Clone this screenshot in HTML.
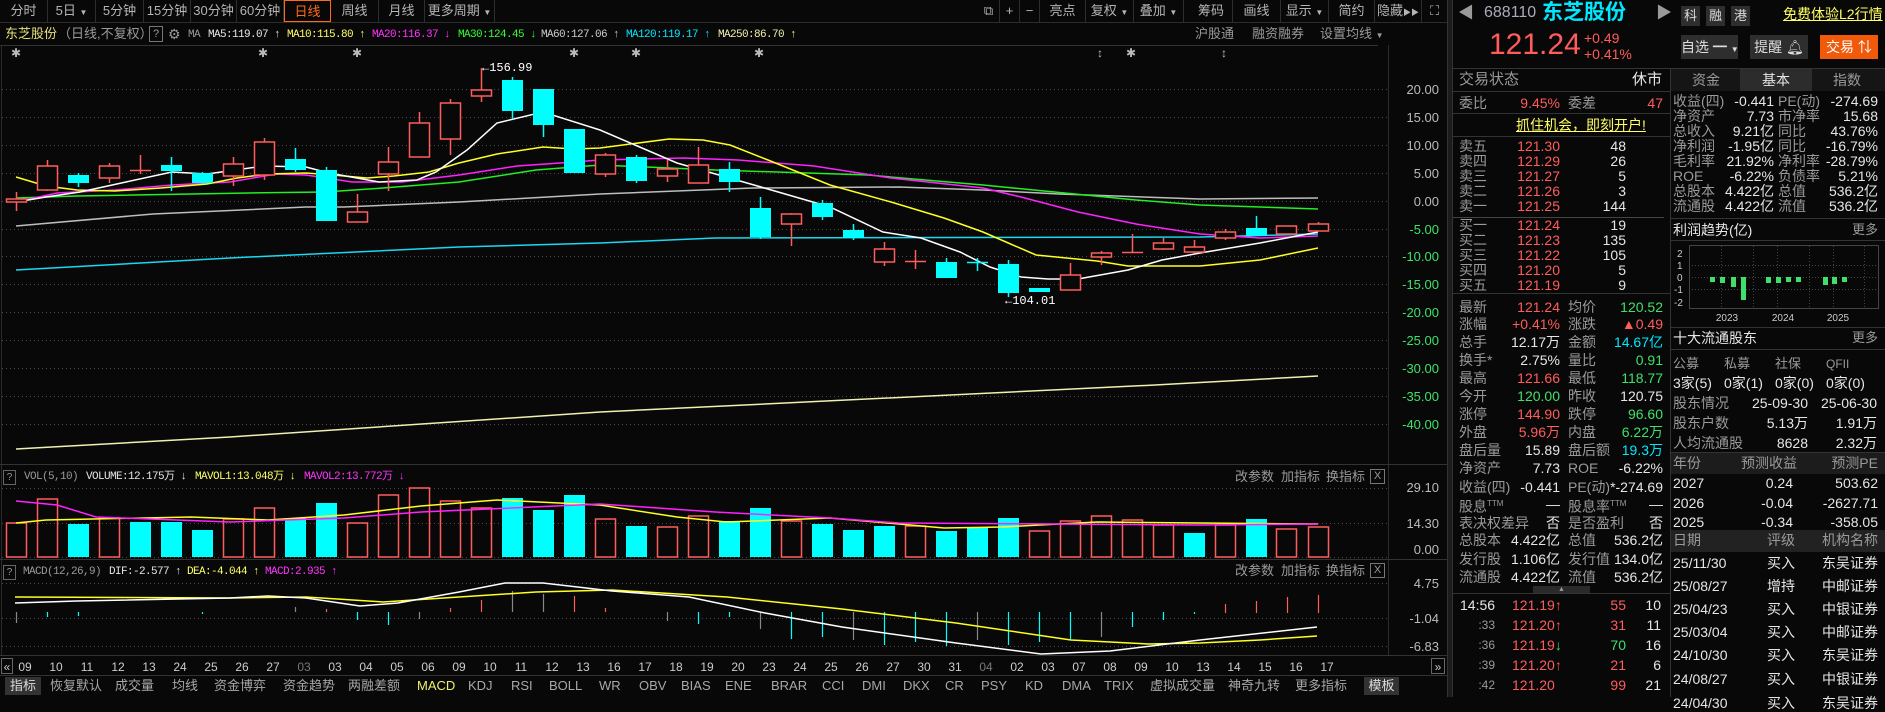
<!DOCTYPE html>
<html><head><meta charset="utf-8">
<style>
*{margin:0;padding:0;box-sizing:border-box}
body{width:1885px;height:697px;background:#080808;overflow:hidden;position:relative;font-family:"Liberation Sans","Noto Sans CJK SC",sans-serif;color:#ddd}
.t{position:absolute;font-size:14px;line-height:18px;white-space:nowrap}
.ra{text-align:right}
.g{color:#9a9a9a}.w{color:#e6e6e6}.r{color:#ff5c5c}.gr{color:#3fe06a}.c{color:#00e8ff}.y{color:#ffff66}
.m{font-family:"Liberation Mono","Noto Sans CJK SC",monospace;font-size:11px;letter-spacing:-0.6px}
.tb{position:absolute;top:0;height:22px;line-height:22px;font-size:13px;color:#b5b5b5;text-align:center;border-right:1px solid #2e2e2e;white-space:nowrap;overflow:hidden}
.bt{position:absolute;top:677px;height:18px;line-height:18px;font-size:13px;color:#a8a8a8;white-space:nowrap}
.hl{position:absolute;height:1px;background:#2c2c2c}
.vl{position:absolute;width:1px;background:#2c2c2c}
.btn{position:absolute;background:#2e2e2e;color:#ddd;font-size:14px;text-align:center;line-height:24px;height:24px;white-space:nowrap}
</style></head><body>

<!-- top toolbar -->
<div class="tb" style="left:0;width:48px">分时</div>
<div class="tb" style="left:48px;width:48px">5日 <span style="font-size:8px">▼</span></div>
<div class="tb" style="left:96px;width:48px">5分钟</div>
<div class="tb" style="left:144px;width:47px">15分钟</div>
<div class="tb" style="left:191px;width:46px">30分钟</div>
<div class="tb" style="left:237px;width:47px">60分钟</div>
<div class="tb" style="left:284px;width:47px;color:#ff6a1a;border:1px solid #ff6a1a">日线</div>
<div class="tb" style="left:331px;width:48px">周线</div>
<div class="tb" style="left:379px;width:46px">月线</div>
<div class="tb" style="left:425px;width:70px">更多周期 <span style="font-size:8px">▼</span></div>
<div class="tb" style="left:978px;width:22px">⧉</div>
<div class="tb" style="left:1000px;width:20px">+</div>
<div class="tb" style="left:1020px;width:20px">−</div>
<div class="tb" style="left:1040px;width:46px">亮点</div>
<div class="tb" style="left:1086px;width:48px">复权 <span style="font-size:8px">▼</span></div>
<div class="tb" style="left:1134px;width:50px">叠加 <span style="font-size:8px">▼</span></div>
<div class="tb" style="left:1190px;width:43px">筹码</div>
<div class="tb" style="left:1233px;width:48px">画线</div>
<div class="tb" style="left:1281px;width:48px">显示 <span style="font-size:8px">▼</span></div>
<div class="tb" style="left:1329px;width:46px">简约</div>
<div class="tb" style="left:1375px;width:47px">隐藏<span style="font-size:8px">▶▶</span></div>
<div class="tb" style="left:1422px;width:25px;border:none">⛶</div>
<div class="hl" style="left:0;top:22px;width:1447px"></div>

<!-- title row -->
<div class="t" style="left:5px;top:25px;color:#e8e27a;font-size:13px">东芝股份</div>
<div class="t g" style="left:58px;top:25px;font-size:13px">（日线,不复权）</div>
<div class="t g" style="left:149px;top:26px;width:14px;height:16px;border:1px solid #777;font-size:11px;line-height:14px;text-align:center">?</div>
<div class="t g" style="left:168px;top:25px">⚙</div>
<div class="t m g" style="left:188px;top:26px">MA</div>
<div class="t m w" style="left:208px;top:26px">MA5:119.07 ↑</div>
<div class="t m y" style="left:287px;top:26px">MA10:115.80 ↑</div>
<div class="t m" style="left:372px;top:26px;color:#ff33ff">MA20:116.37 ↓</div>
<div class="t m" style="left:458px;top:26px;color:#33ff33">MA30:124.45 ↓</div>
<div class="t m" style="left:541px;top:26px;color:#ccc">MA60:127.06 ↑</div>
<div class="t m c" style="left:626px;top:26px">MA120:119.17 ↑</div>
<div class="t m" style="left:718px;top:26px;color:#f0f0b0">MA250:86.70 <span class="y">↑</span></div>
<div class="t g" style="left:1195px;top:25px;font-size:13px">沪股通</div>
<div class="t g" style="left:1252px;top:25px;font-size:13px">融资融券</div>
<div class="t g" style="left:1320px;top:25px;font-size:13px">设置均线 <span style="font-size:8px">▼</span></div>
<div class="hl" style="left:0;top:45px;width:1378px;background:#333"></div>

<svg style="position:absolute;left:0;top:0" width="1447" height="697" xmlns="http://www.w3.org/2000/svg">
<g fill="#bbb" font-size="12" text-anchor="middle" font-family="Liberation Sans, sans-serif">
<text x="16" y="57">✱</text><text x="263" y="57">✱</text><text x="357" y="57">✱</text><text x="574" y="57">✱</text><text x="636" y="57">✱</text><text x="759" y="57">✱</text><text x="1131" y="57">✱</text><text x="1100" y="57">↕</text><text x="1224" y="57">↕</text>
</g>
<line x1="1.5" y1="45" x2="1.5" y2="655" stroke="#2c2c2c"/>
<line x1="1388.5" y1="45" x2="1388.5" y2="655" stroke="#2c2c2c"/>
<g stroke="#4a4a4a" stroke-dasharray="1 3">
<line x1="2" y1="89.5" x2="1388" y2="89.5"/><line x1="2" y1="117.5" x2="1388" y2="117.5"/><line x1="2" y1="145.5" x2="1388" y2="145.5"/><line x1="2" y1="173.5" x2="1388" y2="173.5"/><line x1="2" y1="201.5" x2="1388" y2="201.5"/><line x1="2" y1="229.5" x2="1388" y2="229.5"/><line x1="2" y1="256.5" x2="1388" y2="256.5"/><line x1="2" y1="284.5" x2="1388" y2="284.5"/><line x1="2" y1="312.5" x2="1388" y2="312.5"/><line x1="2" y1="340.5" x2="1388" y2="340.5"/><line x1="2" y1="368.5" x2="1388" y2="368.5"/><line x1="2" y1="396.5" x2="1388" y2="396.5"/><line x1="2" y1="424.5" x2="1388" y2="424.5"/>
<line x1="2" y1="488.5" x2="1388" y2="488.5"/><line x1="2" y1="523.5" x2="1388" y2="523.5"/><line x1="2" y1="557.5" x2="1388" y2="557.5"/>
<line x1="2" y1="583.5" x2="1388" y2="583.5"/><line x1="2" y1="618.5" x2="1388" y2="618.5"/><line x1="2" y1="646.5" x2="1388" y2="646.5"/>
</g>
<g stroke="#333"><line x1="0" y1="464.5" x2="1447" y2="464.5"/><line x1="0" y1="559.5" x2="1447" y2="559.5"/><line x1="0" y1="655.5" x2="1447" y2="655.5"/><line x1="0" y1="675.5" x2="1447" y2="675.5"/></g>
<g font-family="Liberation Sans, sans-serif" font-size="13" text-anchor="end">
<g fill="#bbb"><text x="1439" y="94">20.00</text><text x="1439" y="122">15.00</text><text x="1439" y="150">10.00</text><text x="1439" y="178">5.00</text><text x="1439" y="206">0.00</text></g>
<g fill="#3fe06a"><text x="1439" y="234">-5.00</text><text x="1439" y="261">-10.00</text><text x="1439" y="289">-15.00</text><text x="1439" y="317">-20.00</text><text x="1439" y="345">-25.00</text><text x="1439" y="373">-30.00</text><text x="1439" y="401">-35.00</text><text x="1439" y="429">-40.00</text></g>
<g fill="#bbb"><text x="1439" y="492">29.10</text><text x="1439" y="528">14.30</text><text x="1439" y="554">0.00</text><text x="1439" y="588">4.75</text><text x="1439" y="623">-1.04</text><text x="1439" y="651">-6.83</text></g>
</g>
<g fill="none" stroke-width="1.5">
<polyline stroke="#f0f0b0" points="16,449 230,437 600,412 1155,385 1318,376"/>
<polyline stroke="#1ad8f0" points="16,270 230,258 459,247 600,243 715,238 1200,237 1318,234"/>
<polyline stroke="#bdbdbd" points="16,226 153,214 306,207 344,207 459,202 600,194 753,188 899,187 983,190 1059,194 1200,199 1318,198"/>
<polyline stroke="#22ee22" points="16,198 77,196 249,193 325,192 383,188 459,182 536,170 600,165 715,170 868,175 983,185 1075,194 1136,200 1200,205 1318,209"/>
<polyline stroke="#ff22ff" points="16,202 57,193 115,190 172,185 230,182 276,174 306,175 352,182 402,182 459,175 517,166 574,162 600,160 684,158 738,160 814,166 891,178 983,188 1021,197 1078,212 1136,224 1200,234 1260,238 1318,236"/>
<polyline stroke="#ffff22" points="16,177 46,186 77,190 115,191 161,188 207,184 237,178 268,174 306,173 333,175 367,178 394,176 429,172 459,163 497,154 543,147 574,149 600,148 669,139 703,140 730,145 768,160 830,185 891,202 944,218 983,232 1006,242 1036,255 1097,261 1128,266 1200,266 1260,260 1318,248"/>
<polyline stroke="#ffffff" points="16,202 46,197 80,192 126,182 172,172 207,174 264,166 306,167 329,173 379,182 417,180 436,172 467,150 497,123 543,112 600,130 677,163 761,187 830,207 883,232 921,238 960,252 990,267 1021,277 1048,279 1078,279 1128,270 1162,260 1200,253 1260,243 1318,232"/>
</g>
<g stroke="#ff5c5c" fill="#080808" stroke-width="1.5">
<line x1="16.5" y1="192" x2="16.5" y2="211"/><rect x="6.5" y="199" width="20" height="3"/>
<line x1="47.5" y1="160" x2="47.5" y2="191"/><rect x="37.5" y="166" width="20" height="24"/>
<line x1="109.5" y1="163" x2="109.5" y2="183"/><rect x="99.5" y="166" width="20" height="12"/>
<line x1="140.5" y1="155" x2="140.5" y2="174"/><line x1="130" y1="170.5" x2="151" y2="170.5"/>
<line x1="233.5" y1="157" x2="233.5" y2="186"/><rect x="223.5" y="164" width="20" height="12"/>
<line x1="264.5" y1="138" x2="264.5" y2="180"/><rect x="254.5" y="142" width="20" height="33"/>
<line x1="357.5" y1="194" x2="357.5" y2="212"/><rect x="347.5" y="212" width="20" height="10"/>
<line x1="388.5" y1="147" x2="388.5" y2="191"/><rect x="378.5" y="162" width="20" height="12"/>
<line x1="419.5" y1="112" x2="419.5" y2="123"/><rect x="409.5" y="123" width="20" height="34"/>
<line x1="450.5" y1="99" x2="450.5" y2="155"/><rect x="440.5" y="103" width="20" height="36"/>
<line x1="481.5" y1="68" x2="481.5" y2="102"/><rect x="471.5" y="90" width="20" height="6"/>
<line x1="605.5" y1="153" x2="605.5" y2="177"/><rect x="595.5" y="155" width="20" height="19"/>
<line x1="667.5" y1="160" x2="667.5" y2="182"/><rect x="657.5" y="169" width="20" height="7"/>
<line x1="698.5" y1="147" x2="698.5" y2="183"/><rect x="688.5" y="165" width="20" height="18"/>
<line x1="791.5" y1="213" x2="791.5" y2="246"/><rect x="781.5" y="214" width="20" height="10"/>
<line x1="884.5" y1="242" x2="884.5" y2="266"/><rect x="874.5" y="249" width="20" height="13"/>
<line x1="915.5" y1="250" x2="915.5" y2="269"/><line x1="905" y1="261.5" x2="926" y2="261.5"/>
<line x1="1070.5" y1="263" x2="1070.5" y2="275"/><rect x="1060.5" y="275" width="20" height="15"/>
<line x1="1101.5" y1="251" x2="1101.5" y2="265"/><rect x="1091.5" y="253" width="20" height="4"/>
<line x1="1132.5" y1="234" x2="1132.5" y2="253"/><line x1="1122" y1="252.5" x2="1143" y2="252.5"/>
<line x1="1163.5" y1="238" x2="1163.5" y2="250"/><rect x="1153.5" y="243" width="20" height="6"/>
<line x1="1194.5" y1="240" x2="1194.5" y2="253"/><rect x="1184.5" y="247" width="20" height="5"/>
<line x1="1225.5" y1="229" x2="1225.5" y2="240"/><rect x="1215.5" y="232" width="20" height="6"/>
<rect x="1276.5" y="226" width="20" height="8"/>
<line x1="1318.5" y1="222" x2="1318.5" y2="224"/><rect x="1308.5" y="224" width="20" height="7"/>
</g>
<g fill="#00ffff" stroke="#00ffff" stroke-width="1.5">
<line x1="78.5" y1="173" x2="78.5" y2="187"/><rect x="68" y="175" width="21" height="8" stroke="none"/>
<line x1="171.5" y1="157" x2="171.5" y2="191"/><rect x="161" y="165" width="21" height="6" stroke="none"/>
<line x1="202.5" y1="172" x2="202.5" y2="184"/><rect x="192" y="173" width="21" height="10" stroke="none"/>
<line x1="295.5" y1="148" x2="295.5" y2="172"/><rect x="285" y="159" width="21" height="11" stroke="none"/>
<line x1="326.5" y1="167" x2="326.5" y2="221"/><rect x="316" y="170" width="21" height="51" stroke="none"/>
<line x1="512.5" y1="77" x2="512.5" y2="119"/><rect x="502" y="80" width="21" height="31" stroke="none"/>
<line x1="543.5" y1="89" x2="543.5" y2="137"/><rect x="533" y="89" width="21" height="36" stroke="none"/>
<rect x="564" y="129" width="21" height="44" stroke="none"/>
<line x1="636.5" y1="155" x2="636.5" y2="183"/><rect x="626" y="157" width="21" height="24" stroke="none"/>
<line x1="729.5" y1="162" x2="729.5" y2="192"/><rect x="719" y="169" width="21" height="13" stroke="none"/>
<line x1="760.5" y1="197" x2="760.5" y2="239"/><rect x="750" y="208" width="21" height="29" stroke="none"/>
<line x1="822.5" y1="200" x2="822.5" y2="220"/><rect x="812" y="203" width="21" height="14" stroke="none"/>
<line x1="853.5" y1="224" x2="853.5" y2="240"/><rect x="843" y="230" width="21" height="8" stroke="none"/>
<line x1="946.5" y1="258" x2="946.5" y2="278"/><rect x="936" y="262" width="21" height="16" stroke="none"/>
<line x1="977.5" y1="258" x2="977.5" y2="271"/><line x1="967" y1="262.5" x2="988" y2="262.5"/>
<line x1="1008.5" y1="260" x2="1008.5" y2="297"/><rect x="998" y="264" width="21" height="29" stroke="none"/>
<rect x="1029" y="288" width="21" height="4" stroke="none"/>
<line x1="1256.5" y1="216" x2="1256.5" y2="236"/><rect x="1246" y="228" width="21" height="8" stroke="none"/>
</g>
<g fill="#fff" font-family="Liberation Mono, monospace" font-size="12"><text x="482" y="71">←156.99</text><text x="1005" y="304">←104.01</text></g>

<g stroke="#ff5c5c" fill="none" stroke-width="1.5">
<rect x="6.5" y="523" width="20" height="34"/><rect x="37.5" y="499" width="20" height="58"/><rect x="99.5" y="518" width="20" height="39"/><rect x="223.5" y="519" width="20" height="38"/><rect x="254.5" y="508" width="20" height="49"/><rect x="347.5" y="523" width="20" height="34"/><rect x="378.5" y="495" width="20" height="62"/><rect x="409.5" y="488" width="20" height="69"/><rect x="440.5" y="501" width="20" height="56"/><rect x="471.5" y="508" width="20" height="49"/><rect x="595.5" y="519" width="20" height="38"/><rect x="657.5" y="527" width="20" height="30"/><rect x="688.5" y="516" width="20" height="41"/><rect x="781.5" y="521" width="20" height="36"/><rect x="905.5" y="526" width="20" height="31"/><rect x="1029.5" y="531" width="20" height="26"/><rect x="1060.5" y="521" width="20" height="36"/><rect x="1091.5" y="516" width="20" height="41"/><rect x="1122.5" y="520" width="20" height="37"/><rect x="1153.5" y="525" width="20" height="32"/><rect x="1215.5" y="525" width="20" height="32"/><rect x="1276.5" y="529" width="20" height="28"/><rect x="1308.5" y="527" width="20" height="30"/>
</g>
<g fill="#00ffff">
<rect x="68" y="524" width="21" height="33"/><rect x="130" y="522" width="21" height="35"/><rect x="161" y="522" width="21" height="35"/><rect x="192" y="530" width="21" height="27"/><rect x="285" y="518" width="21" height="39"/><rect x="316" y="503" width="21" height="54"/><rect x="502" y="498" width="21" height="59"/><rect x="533" y="510" width="21" height="47"/><rect x="564" y="495" width="21" height="62"/><rect x="626" y="526" width="21" height="31"/><rect x="719" y="521" width="21" height="36"/><rect x="750" y="508" width="21" height="49"/><rect x="812" y="524" width="21" height="33"/><rect x="843" y="530" width="21" height="27"/><rect x="874" y="526" width="21" height="31"/><rect x="936" y="531" width="21" height="26"/><rect x="967" y="528" width="21" height="29"/><rect x="998" y="518" width="21" height="39"/><rect x="1184" y="533" width="21" height="24"/><rect x="1246" y="519" width="21" height="38"/>
</g>
<g fill="none" stroke-width="1.5">
<polyline stroke="#ffff22" points="16,523 46,520 191,517 268,520 344,515 421,506 497,500 600,505 677,517 726,522 830,518 944,528 1002,527 1097,522 1200,523 1318,524"/>
<polyline stroke="#ff22ff" points="16,501 57,505 96,517 230,522 344,518 421,512 600,504 715,512 830,518 899,523 1200,525 1318,524"/>
</g>

<g stroke-width="1.2">
<line x1="16.5" y1="612" x2="16.5" y2="623" stroke="#888"/><line x1="47.5" y1="612" x2="47.5" y2="617" stroke="#0ff"/><line x1="78.5" y1="612" x2="78.5" y2="616" stroke="#0ff"/>
<line x1="202.5" y1="612" x2="202.5" y2="614" stroke="#0ff"/><line x1="295.5" y1="607" x2="295.5" y2="612" stroke="#888"/><line x1="326.5" y1="609" x2="326.5" y2="612" stroke="#ff5c5c"/>
<line x1="357.5" y1="612" x2="357.5" y2="620" stroke="#0ff"/><line x1="388.5" y1="612" x2="388.5" y2="625" stroke="#0ff"/><line x1="419.5" y1="612" x2="419.5" y2="619" stroke="#888"/>
<line x1="450.5" y1="608" x2="450.5" y2="612" stroke="#ff5c5c"/><line x1="481.5" y1="600" x2="481.5" y2="612" stroke="#ff5c5c"/><line x1="512.5" y1="591" x2="512.5" y2="612" stroke="#888"/><line x1="543.5" y1="594" x2="543.5" y2="612" stroke="#888"/><line x1="574.5" y1="596" x2="574.5" y2="612" stroke="#ff5c5c"/><line x1="605.5" y1="608" x2="605.5" y2="612" stroke="#ff5c5c"/>
<line x1="667.5" y1="612" x2="667.5" y2="621" stroke="#888"/><line x1="698.5" y1="612" x2="698.5" y2="624" stroke="#0ff"/><line x1="729.5" y1="612" x2="729.5" y2="617" stroke="#0ff"/><line x1="760.5" y1="612" x2="760.5" y2="629" stroke="#888"/><line x1="791.5" y1="612" x2="791.5" y2="639" stroke="#0ff"/><line x1="822.5" y1="612" x2="822.5" y2="637" stroke="#0ff"/><line x1="853.5" y1="612" x2="853.5" y2="640" stroke="#888"/><line x1="884.5" y1="612" x2="884.5" y2="645" stroke="#0ff"/><line x1="915.5" y1="612" x2="915.5" y2="642" stroke="#0ff"/><line x1="946.5" y1="612" x2="946.5" y2="646" stroke="#0ff"/><line x1="977.5" y1="612" x2="977.5" y2="640" stroke="#888"/><line x1="1008.5" y1="612" x2="1008.5" y2="645" stroke="#0ff"/><line x1="1039.5" y1="612" x2="1039.5" y2="642" stroke="#0ff"/><line x1="1070.5" y1="612" x2="1070.5" y2="640" stroke="#0ff"/><line x1="1101.5" y1="612" x2="1101.5" y2="637" stroke="#888"/><line x1="1132.5" y1="612" x2="1132.5" y2="627" stroke="#0ff"/><line x1="1163.5" y1="612" x2="1163.5" y2="620" stroke="#0ff"/><line x1="1194.5" y1="612" x2="1194.5" y2="614" stroke="#0ff"/>
<line x1="1225.5" y1="604" x2="1225.5" y2="613" stroke="#ff5c5c"/><line x1="1256.5" y1="601" x2="1256.5" y2="613" stroke="#ff5c5c"/><line x1="1287.5" y1="597" x2="1287.5" y2="613" stroke="#ff5c5c"/><line x1="1318.5" y1="595" x2="1318.5" y2="613" stroke="#ff5c5c"/>
</g>
<g fill="none" stroke-width="1.5">
<polyline stroke="#ffff22" points="15,597 230,598 306,597 383,602 459,597 536,592 612,590 727,597 842,609 956,623 1071,640 1148,644 1200,643 1260,640 1317,636"/>
<polyline stroke="#ffffff" points="15,603 77,601 230,598 268,596 306,598 360,606 398,603 459,592 505,583 543,583 612,591 689,597 765,613 842,627 956,643 1041,654 1110,651 1200,640 1317,627"/>
</g>
<g fill="#ccc" font-family="Liberation Sans, sans-serif" font-size="12" text-anchor="middle">
<text x="25" y="671">09</text><text x="56" y="671">10</text><text x="87" y="671">11</text><text x="118" y="671">12</text><text x="149" y="671">13</text><text x="180" y="671">24</text><text x="211" y="671">25</text><text x="242" y="671">26</text><text x="273" y="671">27</text><text x="304" y="671" fill="#777">03</text><text x="335" y="671">03</text><text x="366" y="671">04</text><text x="397" y="671">05</text><text x="428" y="671">06</text><text x="459" y="671">09</text><text x="490" y="671">10</text><text x="521" y="671">11</text><text x="552" y="671">12</text><text x="583" y="671">13</text><text x="614" y="671">16</text><text x="645" y="671">17</text><text x="676" y="671">18</text><text x="707" y="671">19</text><text x="738" y="671">20</text><text x="769" y="671">23</text><text x="800" y="671">24</text><text x="831" y="671">25</text><text x="862" y="671">26</text><text x="893" y="671">27</text><text x="924" y="671">30</text><text x="955" y="671">31</text><text x="986" y="671" fill="#777">04</text><text x="1017" y="671">02</text><text x="1048" y="671">03</text><text x="1079" y="671">07</text><text x="1110" y="671">08</text><text x="1141" y="671">09</text><text x="1172" y="671">10</text><text x="1203" y="671">13</text><text x="1234" y="671">14</text><text x="1265" y="671">15</text><text x="1296" y="671">16</text><text x="1327" y="671">17</text>
</g>
<rect x="1.5" y="658.5" width="11" height="15" fill="none" stroke="#666"/><text x="7" y="671" fill="#ccc" font-size="12" text-anchor="middle">«</text>
<rect x="1431.5" y="658.5" width="13" height="15" fill="none" stroke="#666"/><text x="1438" y="671" fill="#ccc" font-size="12" text-anchor="middle">»</text>
</svg>

<div class="t g" style="left:3px;top:470px;width:13px;height:15px;border:1px solid #666;font-size:10px;line-height:13px;text-align:center">?</div>
<div class="t m g" style="left:24px;top:468px">VOL(5,10)</div>
<div class="t m w" style="left:86px;top:468px">VOLUME:12.175万 ↓</div>
<div class="t m y" style="left:195px;top:468px">MAVOL1:13.048万 ↓</div>
<div class="t m" style="left:304px;top:468px;color:#ff33ff">MAVOL2:13.772万 ↓</div>
<div class="t g" style="left:1235px;top:468px;font-size:13px">改参数</div>
<div class="t g" style="left:1281px;top:468px;font-size:13px">加指标</div>
<div class="t g" style="left:1326px;top:468px;font-size:13px">换指标</div>
<div class="t g" style="left:1370px;top:469px;width:15px;height:15px;border:1px solid #777;font-size:11px;line-height:13px;text-align:center">X</div>
<div class="t g" style="left:3px;top:565px;width:13px;height:15px;border:1px solid #666;font-size:10px;line-height:13px;text-align:center">?</div>
<div class="t m g" style="left:23px;top:563px">MACD(12,26,9)</div>
<div class="t m w" style="left:109px;top:563px">DIF:-2.577 ↑</div>
<div class="t m y" style="left:187px;top:563px">DEA:-4.044 ↑</div>
<div class="t m" style="left:265px;top:563px;color:#ff33ff">MACD:2.935 ↑</div>
<div class="t g" style="left:1235px;top:562px;font-size:13px">改参数</div>
<div class="t g" style="left:1281px;top:562px;font-size:13px">加指标</div>
<div class="t g" style="left:1326px;top:562px;font-size:13px">换指标</div>
<div class="t g" style="left:1370px;top:563px;width:15px;height:15px;border:1px solid #777;font-size:11px;line-height:13px;text-align:center">X</div>

<div class="bt" style="left:5px;width:36px;background:#333;text-align:center;color:#ddd">指标</div>
<div class="bt" style="left:50px">恢复默认</div>
<div class="bt y" style="left:115px">成交量</div>
<div class="bt y" style="left:172px">均线</div>
<div class="bt" style="left:214px">资金博弈</div>
<div class="bt" style="left:283px">资金趋势</div>
<div class="bt" style="left:348px">两融差额</div>
<div class="bt" style="left:417px;color:#f0f070">MACD</div>
<div class="bt" style="left:468px">KDJ</div>
<div class="bt" style="left:511px">RSI</div>
<div class="bt" style="left:549px">BOLL</div>
<div class="bt" style="left:599px">WR</div>
<div class="bt" style="left:639px">OBV</div>
<div class="bt" style="left:681px">BIAS</div>
<div class="bt" style="left:725px">ENE</div>
<div class="bt" style="left:771px">BRAR</div>
<div class="bt" style="left:822px">CCI</div>
<div class="bt" style="left:862px">DMI</div>
<div class="bt" style="left:903px">DKX</div>
<div class="bt" style="left:945px">CR</div>
<div class="bt" style="left:981px">PSY</div>
<div class="bt" style="left:1025px">KD</div>
<div class="bt" style="left:1062px">DMA</div>
<div class="bt" style="left:1104px">TRIX</div>
<div class="bt" style="left:1150px">虚拟成交量</div>
<div class="bt" style="left:1228px">神奇九转</div>
<div class="bt" style="left:1295px">更多指标</div>
<div class="bt" style="left:1364px;width:35px;background:#333;text-align:center;color:#ddd">模板</div>

<div style="position:absolute;left:1447px;top:0;width:6px;height:697px;background:#1c1c1c;border-left:1px solid #333;border-right:1px solid #333"></div>

<div class="t g" style="left:1458px;top:5px;font-size:16px">◀</div>
<div class="t" style="left:1484px;top:4px;font-size:16px;color:#aab">688110</div>
<div class="t c" style="left:1542px;top:1px;font-size:21px;font-weight:bold;line-height:24px">东芝股份</div>
<div class="t g" style="left:1656px;top:5px;font-size:16px">▶</div>
<div class="btn" style="left:1681px;top:6px;width:19px;height:20px;line-height:20px;font-size:13px">科</div>
<div class="btn" style="left:1706px;top:6px;width:19px;height:20px;line-height:20px;font-size:13px">融</div>
<div class="btn" style="left:1731px;top:6px;width:19px;height:20px;line-height:20px;font-size:13px">港</div>
<div class="t y" style="left:1783px;top:5px;font-size:14px;text-decoration:underline">免费体验L2行情</div>
<div class="t r" style="left:1489px;top:30px;font-size:30px;line-height:30px">121.24</div>
<div class="t r" style="left:1584px;top:29px;font-size:14px">+0.49</div>
<div class="t r" style="left:1584px;top:45px;font-size:14px">+0.41%</div>
<div class="btn" style="left:1681px;top:35px;width:57px">自选 ━ <span style="font-size:8px">▼</span></div>
<div class="btn" style="left:1750px;top:35px;width:58px">提醒 🔔︎</div>
<div class="btn" style="left:1820px;top:35px;width:58px;background:#f05a0a;color:#fff">交易 ⇅</div>

<div class="hl" style="left:1453px;top:68px;width:432px;background:#333"></div>
<div class="vl" style="left:1670px;top:68px;height:629px;background:#333"></div>
<div class="t g" style="left:1459px;top:71px;font-size:15px">交易状态</div>
<div class="t ra w" style="right:223px;top:71px;font-size:15px">休市</div>
<div class="hl" style="left:1453px;top:91px;width:217px;background:#333"></div>
<div class="t g" style="left:1459px;top:94px">委比</div><div class="t ra r" style="right:325px;top:94px">9.45%</div>
<div class="t g" style="left:1568px;top:94px">委差</div><div class="t ra r" style="right:222px;top:94px">47</div>
<div class="hl" style="left:1453px;top:113px;width:217px;background:#333"></div>
<div class="t y" style="left:1516px;top:116px;text-decoration:underline">抓住机会，即刻开户!</div>
<div class="hl" style="left:1453px;top:136px;width:217px;background:#333"></div>
<div class="t g" style="left:1459px;top:137px">卖五</div><div class="t ra r" style="right:325px;top:137px">121.30</div><div class="t ra w" style="right:259px;top:137px">48</div>
<div class="t g" style="left:1459px;top:152px">卖四</div><div class="t ra r" style="right:325px;top:152px">121.29</div><div class="t ra w" style="right:259px;top:152px">26</div>
<div class="t g" style="left:1459px;top:167px">卖三</div><div class="t ra r" style="right:325px;top:167px">121.27</div><div class="t ra w" style="right:259px;top:167px">5</div>
<div class="t g" style="left:1459px;top:182px">卖二</div><div class="t ra r" style="right:325px;top:182px">121.26</div><div class="t ra w" style="right:259px;top:182px">3</div>
<div class="t g" style="left:1459px;top:197px">卖一</div><div class="t ra r" style="right:325px;top:197px">121.25</div><div class="t ra w" style="right:259px;top:197px">144</div>
<div class="hl" style="left:1453px;top:217px;width:211px;background:#444"></div>
<div class="t g" style="left:1459px;top:216px">买一</div><div class="t ra r" style="right:325px;top:216px">121.24</div><div class="t ra w" style="right:259px;top:216px">19</div>
<div class="t g" style="left:1459px;top:231px">买二</div><div class="t ra r" style="right:325px;top:231px">121.23</div><div class="t ra w" style="right:259px;top:231px">135</div>
<div class="t g" style="left:1459px;top:246px">买三</div><div class="t ra r" style="right:325px;top:246px">121.22</div><div class="t ra w" style="right:259px;top:246px">105</div>
<div class="t g" style="left:1459px;top:261px">买四</div><div class="t ra r" style="right:325px;top:261px">121.20</div><div class="t ra w" style="right:259px;top:261px">5</div>
<div class="t g" style="left:1459px;top:276px">买五</div><div class="t ra r" style="right:325px;top:276px">121.19</div><div class="t ra w" style="right:259px;top:276px">9</div>
<div class="hl" style="left:1453px;top:293px;width:217px;background:#333"></div>

<div class="t g" style="left:1459px;top:298px">最新</div><div class="t ra r" style="right:325px;top:298px">121.24</div><div class="t g" style="left:1568px;top:298px">均价</div><div class="t ra gr" style="right:222px;top:298px">120.52</div>
<div class="t g" style="left:1459px;top:315px">涨幅</div><div class="t ra r" style="right:325px;top:315px">+0.41%</div><div class="t g" style="left:1568px;top:315px">涨跌</div><div class="t ra r" style="right:222px;top:315px">▲0.49</div>
<div class="t g" style="left:1459px;top:333px">总手</div><div class="t ra w" style="right:325px;top:333px">12.17万</div><div class="t g" style="left:1568px;top:333px">金额</div><div class="t ra c" style="right:222px;top:333px">14.67亿</div>
<div class="t g" style="left:1459px;top:351px">换手*</div><div class="t ra w" style="right:325px;top:351px">2.75%</div><div class="t g" style="left:1568px;top:351px">量比</div><div class="t ra gr" style="right:222px;top:351px">0.91</div>
<div class="t g" style="left:1459px;top:369px">最高</div><div class="t ra r" style="right:325px;top:369px">121.66</div><div class="t g" style="left:1568px;top:369px">最低</div><div class="t ra gr" style="right:222px;top:369px">118.77</div>
<div class="t g" style="left:1459px;top:387px">今开</div><div class="t ra gr" style="right:325px;top:387px">120.00</div><div class="t g" style="left:1568px;top:387px">昨收</div><div class="t ra w" style="right:222px;top:387px">120.75</div>
<div class="t g" style="left:1459px;top:405px">涨停</div><div class="t ra r" style="right:325px;top:405px">144.90</div><div class="t g" style="left:1568px;top:405px">跌停</div><div class="t ra gr" style="right:222px;top:405px">96.60</div>
<div class="t g" style="left:1459px;top:423px">外盘</div><div class="t ra r" style="right:325px;top:423px">5.96万</div><div class="t g" style="left:1568px;top:423px">内盘</div><div class="t ra gr" style="right:222px;top:423px">6.22万</div>
<div class="t g" style="left:1459px;top:441px">盘后量</div><div class="t ra w" style="right:325px;top:441px">15.89</div><div class="t g" style="left:1568px;top:441px">盘后额</div><div class="t ra c" style="right:222px;top:441px">19.3万</div>
<div class="t g" style="left:1459px;top:459px">净资产</div><div class="t ra w" style="right:325px;top:459px">7.73</div><div class="t g" style="left:1568px;top:459px">ROE</div><div class="t ra w" style="right:222px;top:459px">-6.22%</div>
<div class="t g" style="left:1459px;top:478px">收益(四)</div><div class="t ra w" style="right:325px;top:478px">-0.441</div><div class="t g" style="left:1568px;top:478px">PE(动)</div><div class="t ra w" style="right:222px;top:478px">*-274.69</div>
<div class="t g" style="left:1459px;top:495px">股息<sup style="font-size:8px">TTM</sup></div><div class="t ra w" style="right:325px;top:495px">—</div><div class="t g" style="left:1568px;top:495px">股息率<sup style="font-size:8px">TTM</sup></div><div class="t ra w" style="right:222px;top:495px">—</div>
<div class="t g" style="left:1459px;top:514px">表决权差异</div><div class="t ra w" style="right:325px;top:514px">否</div><div class="t g" style="left:1568px;top:514px">是否盈利</div><div class="t ra w" style="right:222px;top:514px">否</div>
<div class="t g" style="left:1459px;top:531px">总股本</div><div class="t ra w" style="right:325px;top:531px">4.422亿</div><div class="t g" style="left:1568px;top:531px">总值</div><div class="t ra w" style="right:222px;top:531px">536.2亿</div>
<div class="t g" style="left:1459px;top:550px">发行股</div><div class="t ra w" style="right:325px;top:550px">1.106亿</div><div class="t g" style="left:1568px;top:550px">发行值</div><div class="t ra w" style="right:222px;top:550px">134.0亿</div>
<div class="t g" style="left:1459px;top:568px">流通股</div><div class="t ra w" style="right:325px;top:568px">4.422亿</div><div class="t g" style="left:1568px;top:568px">流值</div><div class="t ra w" style="right:222px;top:568px">536.2亿</div>
<div style="position:absolute;left:1533px;top:586px;width:57px;height:7px;background:#2a2a2a;color:#999;font-size:7px;line-height:7px;text-align:center">▲</div>
<div class="hl" style="left:1453px;top:593px;width:217px;background:#333"></div>

<div class="t w" style="left:1460px;top:596px">14:56</div><div class="t r" style="left:1512px;top:596px">121.19<b>↑</b></div><div class="t ra r" style="right:259px;top:596px">55</div><div class="t ra w" style="right:224px;top:596px">10</div>
<div class="t ra g" style="right:390px;top:616px;font-size:12px">:33</div><div class="t r" style="left:1512px;top:616px">121.20<b>↑</b></div><div class="t ra r" style="right:259px;top:616px">31</div><div class="t ra w" style="right:224px;top:616px">11</div>
<div class="t ra g" style="right:390px;top:636px;font-size:12px">:36</div><div class="t r" style="left:1512px;top:636px">121.19<b class="gr">↓</b></div><div class="t ra gr" style="right:259px;top:636px">70</div><div class="t ra w" style="right:224px;top:636px">16</div>
<div class="t ra g" style="right:390px;top:656px;font-size:12px">:39</div><div class="t r" style="left:1512px;top:656px">121.20<b>↑</b></div><div class="t ra r" style="right:259px;top:656px">21</div><div class="t ra w" style="right:224px;top:656px">6</div>
<div class="t ra g" style="right:390px;top:676px;font-size:12px">:42</div><div class="t r" style="left:1512px;top:676px">121.20</div><div class="t ra r" style="right:259px;top:676px">99</div><div class="t ra w" style="right:224px;top:676px">21</div>

<div style="position:absolute;left:1671px;top:69px;width:214px;height:22px;background:#151515"></div>
<div style="position:absolute;left:1740px;top:69px;width:72px;height:22px;background:#2c2c2c"></div>
<div class="t g" style="left:1692px;top:71px">资金</div>
<div class="t w" style="left:1762px;top:71px">基本</div>
<div class="t g" style="left:1833px;top:71px">指数</div>
<div class="t g" style="left:1673px;top:94px;line-height:15px">收益(四)</div><div class="t ra w" style="right:111px;top:94px;line-height:15px">-0.441</div><div class="t g" style="left:1778px;top:94px;line-height:15px">PE(动)</div><div class="t ra w" style="right:7px;top:94px;line-height:15px">-274.69</div>
<div class="t g" style="left:1673px;top:109px;line-height:15px">净资产</div><div class="t ra w" style="right:111px;top:109px;line-height:15px">7.73</div><div class="t g" style="left:1778px;top:109px;line-height:15px">市净率</div><div class="t ra w" style="right:7px;top:109px;line-height:15px">15.68</div>
<div class="t g" style="left:1673px;top:124px;line-height:15px">总收入</div><div class="t ra w" style="right:111px;top:124px;line-height:15px">9.21亿</div><div class="t g" style="left:1778px;top:124px;line-height:15px">同比</div><div class="t ra w" style="right:7px;top:124px;line-height:15px">43.76%</div>
<div class="t g" style="left:1673px;top:139px;line-height:15px">净利润</div><div class="t ra w" style="right:111px;top:139px;line-height:15px">-1.95亿</div><div class="t g" style="left:1778px;top:139px;line-height:15px">同比</div><div class="t ra w" style="right:7px;top:139px;line-height:15px">-16.79%</div>
<div class="t g" style="left:1673px;top:154px;line-height:15px">毛利率</div><div class="t ra w" style="right:111px;top:154px;line-height:15px">21.92%</div><div class="t g" style="left:1778px;top:154px;line-height:15px">净利率</div><div class="t ra w" style="right:7px;top:154px;line-height:15px">-28.79%</div>
<div class="t g" style="left:1673px;top:169px;line-height:15px">ROE</div><div class="t ra w" style="right:111px;top:169px;line-height:15px">-6.22%</div><div class="t g" style="left:1778px;top:169px;line-height:15px">负债率</div><div class="t ra w" style="right:7px;top:169px;line-height:15px">5.21%</div>
<div class="t g" style="left:1673px;top:184px;line-height:15px">总股本</div><div class="t ra w" style="right:111px;top:184px;line-height:15px">4.422亿</div><div class="t g" style="left:1778px;top:184px;line-height:15px">总值</div><div class="t ra w" style="right:7px;top:184px;line-height:15px">536.2亿</div>
<div class="t g" style="left:1673px;top:199px;line-height:15px">流通股</div><div class="t ra w" style="right:111px;top:199px;line-height:15px">4.422亿</div><div class="t g" style="left:1778px;top:199px;line-height:15px">流值</div><div class="t ra w" style="right:7px;top:199px;line-height:15px">536.2亿</div>
<div class="hl" style="left:1671px;top:218px;width:214px;background:#333"></div>
<div class="t w" style="left:1673px;top:221px">利润趋势(亿)</div><div class="t ra g" style="right:7px;top:221px;font-size:13px">更多</div>
<div class="hl" style="left:1671px;top:240px;width:214px;background:#333"></div>
<svg style="position:absolute;left:1671px;top:240px" width="214" height="87" xmlns="http://www.w3.org/2000/svg">
<g fill="#ccc" font-size="10" font-family="Liberation Sans, sans-serif"><text x="6" y="17">2</text><text x="6" y="29">1</text><text x="6" y="41">0</text><text x="3" y="53">-1</text><text x="3" y="66">-2</text>
<text x="56" y="81" text-anchor="middle">2023</text><text x="112" y="81" text-anchor="middle">2024</text><text x="167" y="81" text-anchor="middle">2025</text></g>
<rect x="18.5" y="5.5" width="189" height="63" fill="none" stroke="#444"/>
<g stroke="#444" stroke-dasharray="1 2"><line x1="18" y1="25.5" x2="207" y2="25.5"/><line x1="18" y1="37.5" x2="207" y2="37.5"/><line x1="18" y1="49.5" x2="207" y2="49.5"/><line x1="50.5" y1="6" x2="50.5" y2="68"/><line x1="82.5" y1="6" x2="82.5" y2="68"/><line x1="106.5" y1="6" x2="106.5" y2="68"/><line x1="138.5" y1="6" x2="138.5" y2="68"/><line x1="162.5" y1="6" x2="162.5" y2="68"/><line x1="193.5" y1="6" x2="193.5" y2="68"/></g>
<g fill="#3fe06a"><rect x="39" y="37" width="5" height="5"/><rect x="49" y="37" width="5" height="6"/><rect x="60" y="37" width="5" height="10"/><rect x="70" y="37" width="5" height="23"/><rect x="95" y="37" width="5" height="6"/><rect x="105" y="37" width="5" height="6"/><rect x="115" y="37" width="5" height="5"/><rect x="125" y="37" width="5" height="5"/><rect x="152" y="37" width="5" height="8"/><rect x="161" y="37" width="5" height="7"/><rect x="171" y="37" width="5" height="5"/></g>
</svg>
<div class="hl" style="left:1671px;top:327px;width:214px;background:#333"></div>
<div class="t w" style="left:1673px;top:329px">十大流通股东</div><div class="t ra g" style="right:7px;top:329px;font-size:13px">更多</div>
<div class="hl" style="left:1671px;top:349px;width:214px;background:#333"></div>
<div class="t g" style="left:1673px;top:355px;font-size:13px">公募</div><div class="t g" style="left:1724px;top:355px;font-size:13px">私募</div><div class="t g" style="left:1775px;top:355px;font-size:13px">社保</div><div class="t g" style="left:1826px;top:355px;font-size:12px">QFII</div>
<div class="t w" style="left:1673px;top:374px">3家(5)</div><div class="t w" style="left:1724px;top:374px">0家(1)</div><div class="t w" style="left:1775px;top:374px">0家(0)</div><div class="t w" style="left:1826px;top:374px">0家(0)</div>
<div class="t g" style="left:1673px;top:394px">股东情况</div><div class="t ra w" style="right:77px;top:394px">25-09-30</div><div class="t ra w" style="right:8px;top:394px">25-06-30</div>
<div class="t g" style="left:1673px;top:414px">股东户数</div><div class="t ra w" style="right:77px;top:414px">5.13万</div><div class="t ra w" style="right:8px;top:414px">1.91万</div>
<div class="t g" style="left:1673px;top:434px">人均流通股</div><div class="t ra w" style="right:77px;top:434px">8628</div><div class="t ra w" style="right:8px;top:434px">2.32万</div>
<div style="position:absolute;left:1671px;top:452px;width:214px;height:22px;background:#1c1c1c;border-top:1px solid #333"></div>
<div class="t g" style="left:1673px;top:454px">年份</div><div class="t g" style="left:1741px;top:454px">预测收益</div><div class="t ra g" style="right:7px;top:454px">预测PE</div>
<div class="t w" style="left:1673px;top:474px">2027</div><div class="t ra w" style="right:92px;top:474px">0.24</div><div class="t ra w" style="right:7px;top:474px">503.62</div>
<div class="t w" style="left:1673px;top:494px">2026</div><div class="t ra w" style="right:92px;top:494px">-0.04</div><div class="t ra w" style="right:7px;top:494px">-2627.71</div>
<div class="t w" style="left:1673px;top:513px">2025</div><div class="t ra w" style="right:92px;top:513px">-0.34</div><div class="t ra w" style="right:7px;top:513px">-358.05</div>
<div style="position:absolute;left:1671px;top:530px;width:214px;height:22px;background:#222"></div>
<div class="t g" style="left:1673px;top:531px">日期</div><div class="t g" style="left:1767px;top:531px">评级</div><div class="t ra g" style="right:7px;top:531px">机构名称</div>
<div class="t w" style="left:1673px;top:554px">25/11/30</div><div class="t w" style="left:1767px;top:554px">买入</div><div class="t ra w" style="right:7px;top:554px">东吴证券</div>
<div class="t w" style="left:1673px;top:577px">25/08/27</div><div class="t w" style="left:1767px;top:577px">增持</div><div class="t ra w" style="right:7px;top:577px">中邮证券</div>
<div class="t w" style="left:1673px;top:600px">25/04/23</div><div class="t w" style="left:1767px;top:600px">买入</div><div class="t ra w" style="right:7px;top:600px">中银证券</div>
<div class="t w" style="left:1673px;top:623px">25/03/04</div><div class="t w" style="left:1767px;top:623px">买入</div><div class="t ra w" style="right:7px;top:623px">中邮证券</div>
<div class="t w" style="left:1673px;top:646px">24/10/30</div><div class="t w" style="left:1767px;top:646px">买入</div><div class="t ra w" style="right:7px;top:646px">东吴证券</div>
<div class="t w" style="left:1673px;top:670px">24/08/27</div><div class="t w" style="left:1767px;top:670px">买入</div><div class="t ra w" style="right:7px;top:670px">中银证券</div>
<div class="t w" style="left:1673px;top:694px">24/04/30</div><div class="t w" style="left:1767px;top:694px">买入</div><div class="t ra w" style="right:7px;top:694px">东吴证券</div>
</body></html>
